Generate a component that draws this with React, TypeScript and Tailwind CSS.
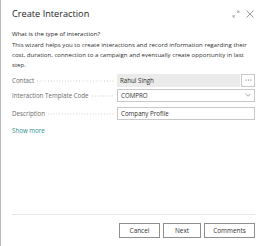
import React from "react";

const Leader = () => (
  <svg className="flex-1 mx-[3px] mt-[2px]" height="2" preserveAspectRatio="none">
    <line x1="0" y1="1" x2="100%" y2="1" stroke="#b8b8b8" strokeWidth="0.8" strokeDasharray="0.8 2" />
  </svg>
);

const Field = ({ label, children }: { label: string; children: React.ReactNode }) => (
  <div className="flex items-center h-[13px]">
    <div className="flex items-center w-[105px] shrink-0">
      <span className="text-[#6b6b6b] whitespace-nowrap">{label}</span>
      <Leader />
    </div>
    <div className="flex-1 flex h-full">{children}</div>
  </div>
);

export default function App() {
  return (
    <div
      className="w-[263px] h-[246px] bg-white border-l border-[#b9b9b9] flex flex-col text-[#3b3a39] overflow-hidden"
      style={{ fontFamily: '"Open Sans", "Noto Sans", sans-serif' }}
    >
      <div className="pl-[11px] pr-[9px] pt-[7px] flex items-center justify-between">
        <span className="text-[9.2px] text-[#252423]">Create Interaction</span>
        <div className="flex items-center gap-[6px]">
          <svg width="8" height="8" viewBox="0 0 8 8" fill="none" stroke="#a0a0a0" strokeWidth="0.8">
            <path d="M1 7 L3.2 4.8" />
            <path d="M4.8 3.2 L7 1" />
            <path d="M5 1 H7 V3" />
            <path d="M1 5 V7 H3" />
          </svg>
          <svg width="8" height="8" viewBox="0 0 8 8" fill="none" stroke="#858585" strokeWidth="0.8">
            <path d="M0.5 0.5 L7.5 7.5 M7.5 0.5 L0.5 7.5" />
          </svg>
        </div>
      </div>
      <div className="pl-[11px] pr-[8px] mt-[8px] text-[6.1px] leading-[10px]">
        <div className="text-[#252423]">What is the type of interaction?</div>
        <div className="mt-[1px] text-[#323130]">
          This wizard helps you to create interactions and record information regarding their cost, duration,
          connection to a campaign and eventually create opportunity in last step.
        </div>
      </div>
      <div className="pl-[11px] pr-[8px] mt-[4px] flex flex-col text-[6.2px]">
        <Field label="Contact">
          <div className="flex-1 bg-[#ebebeb] flex items-center px-[3px] text-[#323130]">Rahul Singh</div>
          <div className="w-[14px] ml-[1px] border border-[#c8c8c8] bg-white flex items-center justify-center">
            <svg width="7" height="2" viewBox="0 0 7 2" fill="#666">
              <circle cx="1" cy="1" r="0.6" />
              <circle cx="3.5" cy="1" r="0.6" />
              <circle cx="6" cy="1" r="0.6" />
            </svg>
          </div>
        </Field>
        <div className="h-[2px]" />
        <Field label="Interaction Template Code">
          <div className="flex-1 border border-[#c8c8c8] flex items-center justify-between px-[3px] text-[#323130]">
            <span>COMPRO</span>
            <svg width="6" height="4" viewBox="0 0 6 4" fill="none" stroke="#8a8a8a" strokeWidth="0.7">
              <path d="M0.5 0.8 L3 3.2 L5.5 0.8" />
            </svg>
          </div>
        </Field>
        <div className="h-[5px]" />
        <Field label="Description">
          <div className="flex-1 border border-[#c8c8c8] flex items-center px-[3px] text-[#323130]">Company Profile</div>
        </Field>
      </div>
      <div className="pl-[11px] mt-[6px] text-[6.2px] text-[#2a8a90]">Show more</div>
      <div className="flex-1" />
      <div className="ml-[11px] mr-[8px] border-t border-[#e6e6e6]" />
      <div className="flex justify-end gap-[3px] pr-[8px] mt-[8px] mb-[8px] text-[6.4px] text-[#323130]">
        <div className="w-[41px] h-[15px] border border-[#8f8f8f] flex items-center justify-center">Cancel</div>
        <div className="w-[38px] h-[15px] border border-[#8f8f8f] flex items-center justify-center">Next</div>
        <div className="w-[51px] h-[15px] border border-[#8f8f8f] flex items-center justify-center">Comments</div>
      </div>
    </div>
  );
}
